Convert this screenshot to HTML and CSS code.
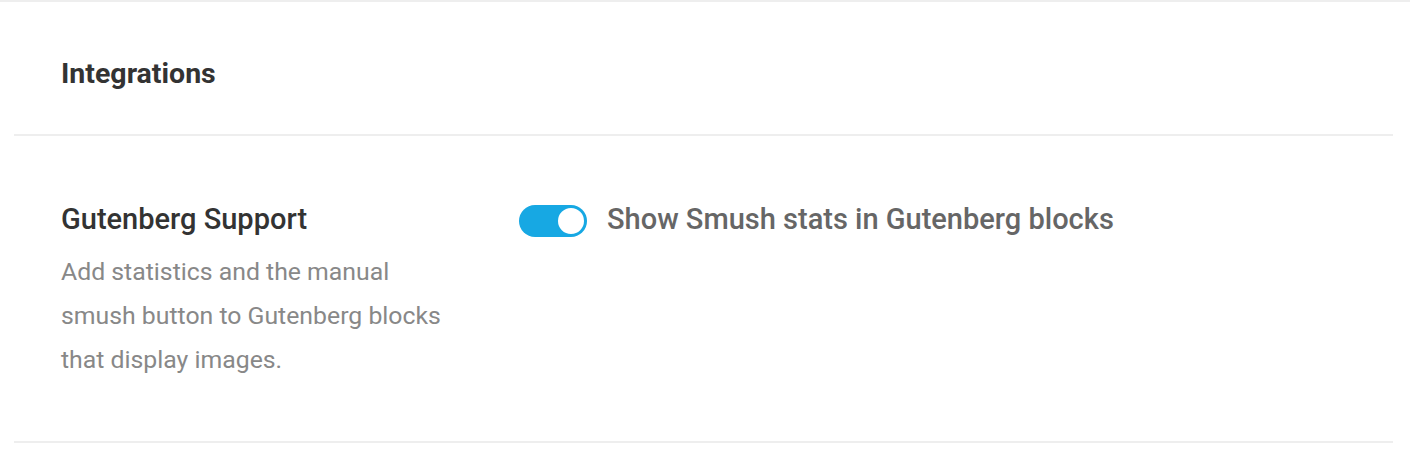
FILE: index.html
```html
<!DOCTYPE html>
<html lang="en">
<head>
    <meta charset="UTF-8">
    <meta name="viewport" content="width=device-width, initial-scale=1.0">
    <title>Integrations</title>
    <link rel="stylesheet" href="styles.css">
</head>
<body>
    <div class="box">
        <div class="box-header">
            <h2>Integrations</h2>
        </div>
        <div class="box-body">
            <div class="setting">
                <div class="setting-label">
                    <h3>Gutenberg Support</h3>
                    <p>Add statistics and the manual smush button to Gutenberg blocks that display images.</p>
                </div>
                <div class="setting-field">
                    <label class="toggle">
                        <input type="checkbox" checked>
                        <span class="slider"></span>
                    </label>
                    <span class="toggle-label">Show Smush stats in Gutenberg blocks</span>
                </div>
            </div>
        </div>
    </div>
</body>
</html>
```

FILE: styles.css
```css
body {
    margin: 0;
    padding: 0;
    font-family: Roboto, "Liberation Sans", sans-serif;
    background: #fff;
    border-top: 2px solid #eee;
}
.box {
    margin: 0 17px 0 14px;
    background: #fff;
}
.box-header {
    height: 132px;
    display: flex;
    align-items: center;
    padding-left: 47px;
    border-bottom: 2px solid #eee;
}
.box-header h2 {
    margin: 0;
    font-size: 28.5px;
    font-weight: 700;
    color: #333;
    padding-top: 10px;
}
.box-body {
    padding: 65px 47px 59px;
    border-bottom: 2px solid #eee;
}
.setting {
    display: flex;
}
.setting-label {
    width: 458px;
}
.setting-label h3 {
    margin: 0;
    font-size: 29px;
    font-weight: 500;
    color: #333;
    line-height: 36px;
}
.setting-label p {
    margin: 13px 0 0;
    font-size: 24.8px;
    line-height: 44px;
    color: #888;
    width: 388px;
}
.setting-field {
    display: flex;
    align-items: center;
    gap: 20px;
    height: 36px;
}
.toggle {
    position: relative;
    display: block;
    width: 68px;
    height: 32px;
    margin-top: 3px;
}
.toggle input {
    display: none;
}
.slider {
    position: absolute;
    inset: 0;
    background: #17a8e3;
    border-radius: 16px;
}
.slider::after {
    content: "";
    position: absolute;
    right: 1px;
    top: 1px;
    width: 26px;
    height: 26px;
    border-radius: 50%;
    background: #fff;
    border: 2px solid #17a8e3;
}
.toggle-label {
    font-size: 29px;
    font-weight: 500;
    color: #666;
    line-height: 36px;
}
```
